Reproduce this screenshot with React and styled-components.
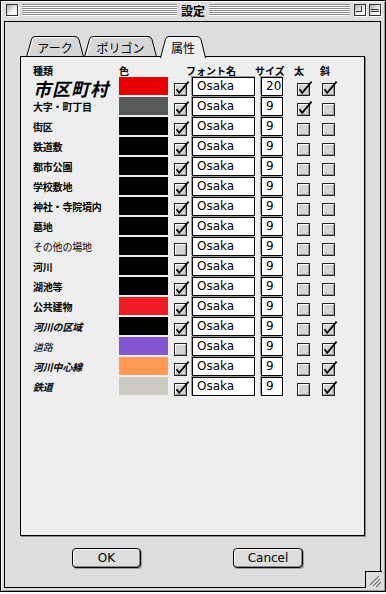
import React from 'react'
import styled, { createGlobalStyle } from 'styled-components'

const GlobalStyle = createGlobalStyle`
  html, body { margin: 0; padding: 0; background: #fff; }
  body { font-family: "Noto Sans CJK JP", "DejaVu Sans", sans-serif; }
  * { box-sizing: border-box; }
  svg { display: block; }
`

const Window = styled.div`
  position: relative;
  width: 386px;
  height: 592px;
  border: 1px solid #000;
  background: #dddddd;
  display: flex;
  flex-direction: column;
  box-shadow: inset 1px 1px 0 #fff, inset -1px -1px 0 #999;
`

const TitleBar = styled.div`
  height: 20px;
  display: flex;
  align-items: flex-start;
  padding: 3px 4px 0 4px;
`

const FrameBox = styled.div`
  width: 12px;
  height: 12px;
  border: 1px solid #333;
  margin-left: ${p => p.$ml || 0}px;
  background: linear-gradient(135deg, #a8a8a8 0%, #eeeeee 55%, #ffffff 100%);
  box-shadow: 1px 1px 0 #fff;
  position: relative;
`

const ZoomMark = styled.div`
  position: absolute;
  left: 1px;
  top: 1px;
  width: 6px;
  height: 6px;
  border-right: 1px solid #333;
  border-bottom: 1px solid #333;
`

const CollapseMark = styled.div`
  position: absolute;
  left: 1px;
  right: 1px;
  top: 4px;
  height: 3px;
  border-top: 1px solid #333;
  border-bottom: 1px solid #333;
`

const Stripes = styled.div`
  flex: ${p => p.$grow};
  height: 12px;
  margin: 0 ${p => p.$mr || 0}px 0 ${p => p.$ml || 0}px;
  background: repeating-linear-gradient(
    to bottom,
    #8a8a8a 0px,
    #8a8a8a 1px,
    #ffffff 1px,
    #ffffff 2px
  );
`

const Title = styled.div`
  padding: 0 4px;
  font-size: 12px;
  font-weight: bold;
  line-height: 13px;
  color: #000;
`

const Content = styled.div`
  flex: 1;
  margin: 0 4px 3px 3px;
  border: 1px solid #000;
  background: #dddddd;
  display: flex;
  flex-direction: column;
  padding: 14px 15px 0 15px;
`

const TabRow = styled.div`
  display: flex;
  height: 21px;
  margin-bottom: -1px;
  padding-left: 6px;
  position: relative;
  z-index: 2;
`

const TabItem = styled.div`
  position: relative;
  width: ${p => p.$w}px;
  height: 21px;
  margin-left: ${p => p.$ml || 0}px;
  display: flex;
  align-items: center;
  justify-content: center;
  padding-top: 2px;
  font-size: 12px;
  color: #000;
  svg {
    position: absolute;
    left: 0;
    top: 0;
  }
  span {
    position: relative;
  }
`

const Panel = styled.div`
  height: 480px;
  background: #eeeeee;
  border: 1px solid #000;
  box-shadow: 1px 1px 0 #8a8a8a;
  padding: 0 0 0 12px;
  position: relative;
  z-index: 1;
`

const HeaderRow = styled.div`
  display: grid;
  grid-template-columns: 86px 67px 69px 39px 26px auto;
  height: 20px;
  padding-top: 8px;
  font-size: 10px;
  line-height: 11px;
  font-weight: bold;
  color: #000;
`

const Row = styled.div`
  display: grid;
  grid-template-columns: 86px 55px 18px 69px 36px 25px 13px;
  height: 20px;
  align-items: start;
`

const Label = styled.div`
  height: 20px;
  display: flex;
  align-items: center;
  white-space: nowrap;
  font-size: ${p => (p.$big ? 18 : 10)}px;
  line-height: ${p => (p.$big ? 18 : 12)}px;
  font-weight: ${p => (p.$bold ? 'bold' : 'normal')};
  font-style: ${p => (p.$italic ? 'italic' : 'normal')};
  color: #000;
  letter-spacing: ${p => (p.$big ? 1 : -0.2)}px;
  padding-top: ${p => (p.$big ? 2 : 0)}px;
`

const Swatch = styled.div`
  width: 49px;
  height: 18px;
  background: ${p => p.$color};
`

const Field = styled.div`
  width: ${p => p.$w}px;
  height: 19px;
  border: 1px solid #000;
  background: #fff;
  box-shadow: -1px -1px 0 #9a9a9a, 1px 1px 0 #fff;
  font-family: "DejaVu Sans", sans-serif;
  font-size: 12px;
  line-height: 17px;
  padding-left: 4px;
  color: #000;
`

const CheckCell = styled.div`
  margin-top: 3px;
  height: 16px;
`

const ButtonRow = styled.div`
  display: flex;
  margin-top: 12px;
  padding-left: 52px;
`

const Button = styled.div`
  width: ${p => p.$w}px;
  height: 20px;
  margin-left: ${p => p.$ml || 0}px;
  border: 1px solid #000;
  border-radius: 4px;
  background: #dddddd;
  box-shadow: inset 1px 1px 0 #fff, inset -1px -1px 0 #888, 1px 1px 0 #999;
  display: flex;
  align-items: center;
  justify-content: center;
  font-family: "DejaVu Sans", sans-serif;
  font-size: 12px;
  color: #000;
`

const GrowBox = styled.div`
  position: absolute;
  right: 3px;
  bottom: 3px;
  width: 17px;
  height: 17px;
  border-top: 1px solid #000;
  border-left: 1px solid #000;
  background: #dddddd;
`

function CheckBox({ on }) {
  return (
    <svg width="16" height="16" viewBox="0 0 16 16">
      <rect x="0.5" y="3.5" width="12" height="12" fill="#d4d4d4" stroke="#222" />
      <path d="M1.5 14 V4.5 H11.5" fill="none" stroke="#fff" />
      <path d="M2 14.5 H11.5 V5" fill="none" stroke="#999" />
      {on && (
        <path
          d="M2.5 9.2 L5.2 12.8 L14.6 1.6"
          fill="none"
          stroke="#000"
          strokeWidth="1.8"
          strokeLinejoin="miter"
        />
      )}
    </svg>
  )
}

function Tab({ w, ml, selected, children }) {
  const h = selected ? 22 : 21
  const outline = `M0.5 ${h} L5.5 3.2 Q6.4 0.5 9 0.5 L${w - 9} 0.5 Q${w - 6} 0.5 ${w - 5} 3.5 L${w - 0.5} ${h}`
  return (
    <TabItem $w={w} $ml={ml}>
      <svg width={w} height={h} viewBox={`0 0 ${w} ${h}`}>
        <path d={outline + (selected ? '' : ' Z')} fill={selected ? '#eeeeee' : '#d6d6d6'} stroke="none" />
        <path d={`M2.2 ${h - 1} L6.6 3.5 Q7.3 1.6 9 1.6 L${w - 9} 1.6`} fill="none" stroke="#fff" />
        <path d={outline} fill="none" stroke="#000" />
        {!selected && <path d={`M0 ${h - 0.5} H${w}`} stroke="#000" />}
      </svg>
      <span>{children}</span>
    </TabItem>
  )
}

const rows = [
  { name: '市区町村', color: '#e60000', show: true, size: '20', bold: true, italic: true, big: true },
  { name: '大字・町丁目', color: '#595959', show: true, size: '9', bold: true, italic: false },
  { name: '街区', color: '#000', show: true, size: '9', bold: false, italic: false },
  { name: '鉄道敷', color: '#000', show: true, size: '9', bold: false, italic: false },
  { name: '都市公園', color: '#000', show: true, size: '9', bold: false, italic: false },
  { name: '学校敷地', color: '#000', show: true, size: '9', bold: false, italic: false },
  { name: '神社・寺院境内', color: '#000', show: true, size: '9', bold: false, italic: false },
  { name: '墓地', color: '#000', show: true, size: '9', bold: false, italic: false },
  { name: 'その他の場地', color: '#000', show: false, size: '9', bold: false, italic: false },
  { name: '河川', color: '#000', show: true, size: '9', bold: false, italic: false },
  { name: '湖池等', color: '#000', show: true, size: '9', bold: false, italic: false },
  { name: '公共建物', color: '#ee1c24', show: true, size: '9', bold: false, italic: false },
  { name: '河川の区域', color: '#000', show: true, size: '9', bold: false, italic: true },
  { name: '道路', color: '#8355d0', show: false, size: '9', bold: false, italic: true },
  { name: '河川中心線', color: '#ff9955', show: true, size: '9', bold: false, italic: true },
  { name: '鉄道', color: '#cdc9c3', show: true, size: '9', bold: false, italic: true },
]

export default function App() {
  return (
    <>
      <GlobalStyle />
      <Window>
        <TitleBar>
          <FrameBox $ml={1} />
          <Stripes $grow={156} $ml={4} />
          <Title>設定</Title>
          <Stripes $grow={142} $mr={4} />
          <FrameBox><ZoomMark /></FrameBox>
          <FrameBox $ml={3}><CollapseMark /></FrameBox>
        </TitleBar>

        <Content>
          <TabRow>
            <Tab w={58}>アーク</Tab>
            <Tab w={73}>ポリゴン</Tab>
            <Tab w={46} ml={3} selected>属性</Tab>
          </TabRow>

          <Panel>
            <HeaderRow>
              <div>種類</div>
              <div>色</div>
              <div>フォント名</div>
              <div>サイズ</div>
              <div>太</div>
              <div>斜</div>
            </HeaderRow>

            {rows.map(r => (
              <Row key={r.name}>
                <Label $big={r.big} $bold={r.show} $italic={r.italic}>{r.name}</Label>
                <Swatch $color={r.color} />
                <CheckCell><CheckBox on={r.show} /></CheckCell>
                <Field $w={63}>Osaka</Field>
                <Field $w={22}>{r.size}</Field>
                <CheckCell><CheckBox on={r.bold} /></CheckCell>
                <CheckCell><CheckBox on={r.italic} /></CheckCell>
              </Row>
            ))}
          </Panel>

          <ButtonRow>
            <Button $w={69}>OK</Button>
            <Button $w={70} $ml={92}>Cancel</Button>
          </ButtonRow>
        </Content>

        <GrowBox>
          <svg width="16" height="16" viewBox="0 0 16 16">
            <path d="M4 13 L13 4 M7 14 L14 7 M10 15 L15 10" stroke="#777" strokeWidth="1.2" />
            <path d="M5 14 L14 5 M8 15 L15 8" stroke="#fff" strokeWidth="1" />
          </svg>
        </GrowBox>
      </Window>
    </>
  )
}
